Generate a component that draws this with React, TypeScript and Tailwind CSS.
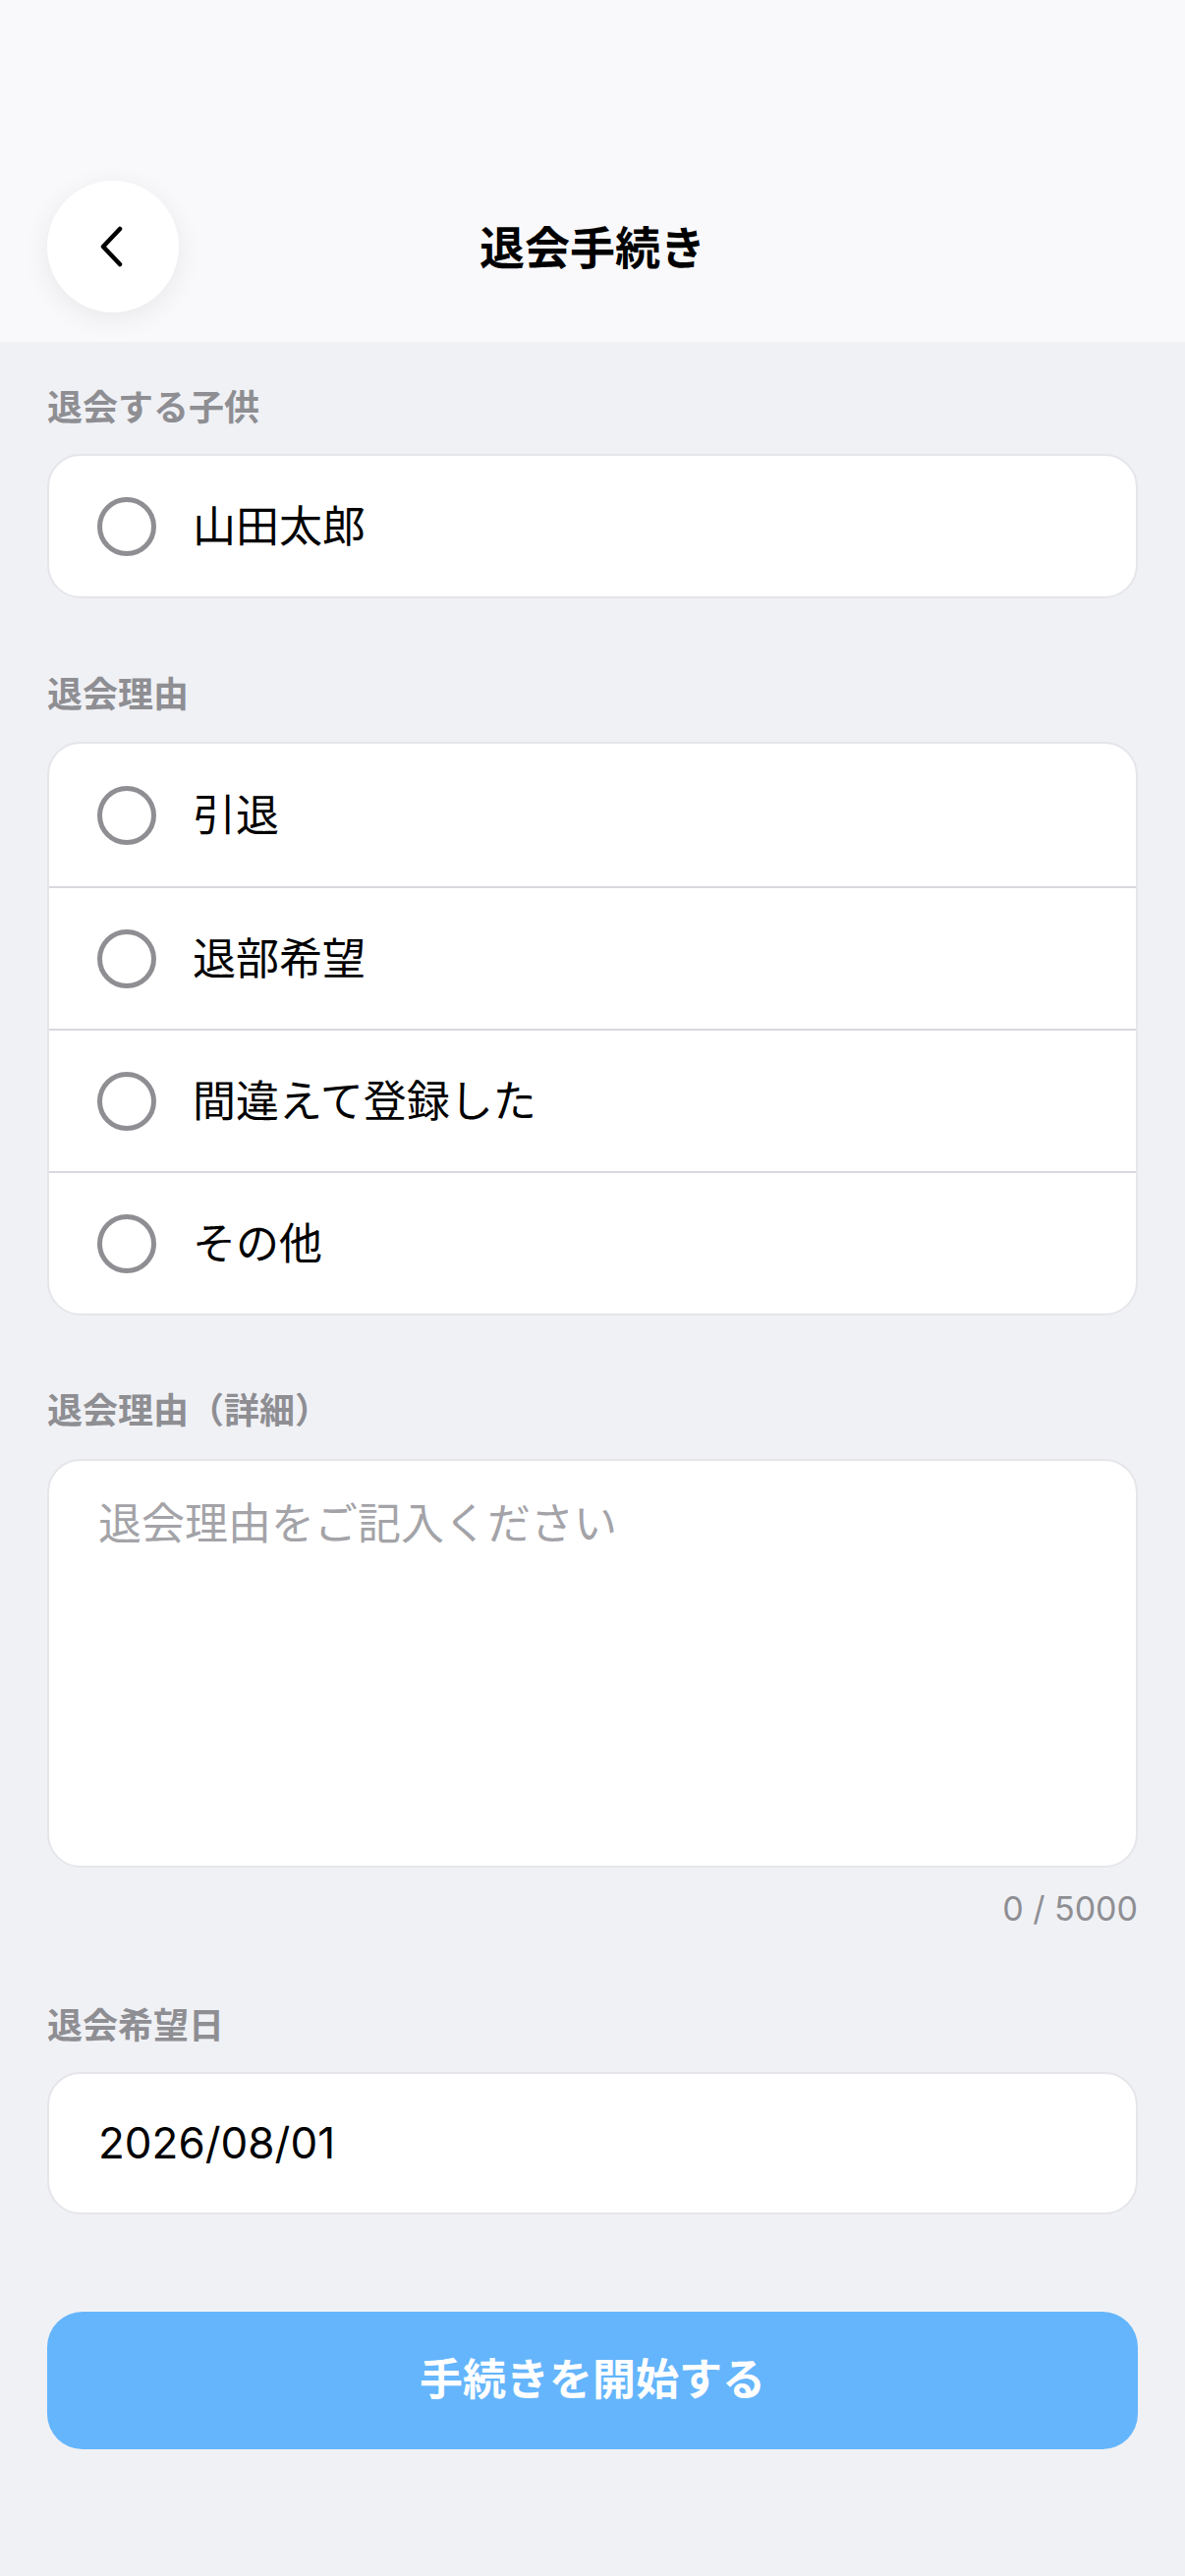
import React from 'react';

const font = { fontFamily: '"Noto Sans CJK JP", sans-serif' };

const reasons = ['引退', '退部希望', '間違えて登録した', 'その他'];

const Radio: React.FC = () => (
    <span className="w-[60px] h-[60px] shrink-0 rounded-full border-[5px] border-[#8e8e93]" />
);

const Label: React.FC<{ text: string; className?: string }> = ({ text, className }) => (
    <div className={`text-[36px] leading-[44px] font-bold text-[#8e8e93] ${className ?? ''}`}>{text}</div>
);

const App: React.FC = () => {
    return (
        <div className="min-h-[2622px] bg-[#f0f1f5]" style={font}>
            <header className="h-[348px] bg-[#f9f9fb] pt-[184px] px-[48px]">
                <div className="grid grid-cols-[134px_1fr_134px] items-center h-[134px]">
                    <button className="w-[134px] h-[134px] rounded-full bg-white shadow-[0_6px_28px_rgba(0,0,0,0.07)] flex items-center justify-center">
                        <svg width="40" height="44" viewBox="0 0 40 44" fill="none">
                            <path d="M27 4 L10 22 L27 40" stroke="#000" strokeWidth="4.5" strokeLinecap="round" strokeLinejoin="round" />
                        </svg>
                    </button>
                    <h1 className="text-center text-[46px] font-bold text-black pb-[4px]">退会手続き</h1>
                    <div />
                </div>
            </header>

            <main className="px-[48px]">
                <Label text="退会する子供" className="mt-[42px] mb-[28px]" />
                <div className="h-[147px] rounded-[34px] bg-white border-[2px] border-[#e5e5ea] flex items-center pl-[49px] gap-[37px]">
                    <Radio />
                    <span className="text-[44px] text-black pb-[6px]">山田太郎</span>
                </div>

                <Label text="退会理由" className="mt-[73px] mb-[29px]" />
                <div className="rounded-[34px] bg-white border-[2px] border-[#e5e5ea] overflow-hidden">
                    {reasons.map((r, i) => (
                        <div
                            key={r}
                            className={`h-[145px] flex items-center pl-[49px] gap-[37px] ${i > 0 ? 'border-t-[2px] border-[#d8d8de]' : ''}`}
                        >
                            <Radio />
                            <span className="text-[44px] text-black pb-[6px]">{r}</span>
                        </div>
                    ))}
                </div>

                <Label text="退会理由（詳細）" className="mt-[72px] mb-[30px]" />
                <div className="h-[416px] rounded-[34px] bg-white border-[2px] border-[#e5e5ea] px-[50px] pt-[28px]">
                    <span className="text-[44px] leading-[66px] text-[#a3a3a8]">退会理由をご記入ください</span>
                </div>
                <div className="mt-[22px] text-right text-[34px] leading-[40px] text-[#8e8e93]" style={{ fontFamily: 'Inter, "Noto Sans CJK JP", sans-serif' }}>
                    0 / 5000
                </div>

                <Label text="退会希望日" className="mt-[74px] mb-[28px]" />
                <div className="h-[145px] rounded-[34px] bg-white border-[2px] border-[#e5e5ea] flex items-center px-[50px]">
                    <span className="text-[44px] text-black pb-[2px]" style={{ fontFamily: 'Inter, "Noto Sans CJK JP", sans-serif' }}>
                        2026/08/01
                    </span>
                </div>

                <button className="mt-[99px] w-full h-[140px] rounded-[36px] bg-[#64b5fc] text-white text-[44px] font-bold pb-[8px]">
                    手続きを開始する
                </button>
            </main>
        </div>
    );
};

export default App;
